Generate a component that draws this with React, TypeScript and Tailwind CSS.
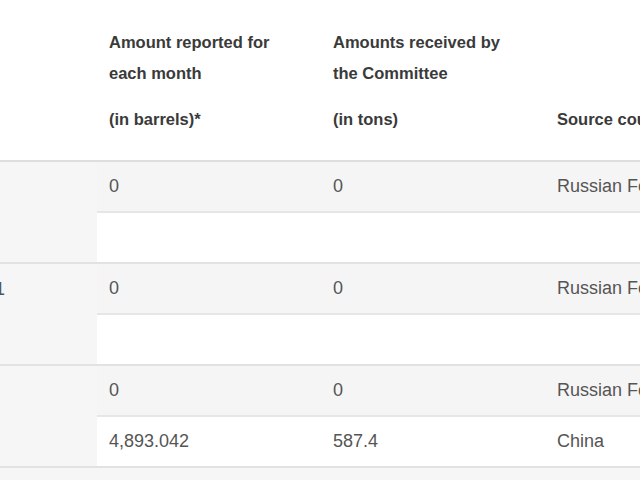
const groups = [
  {
    month: "May 2020",
    rows: [
      { barrels: "0", tons: "0", source: "Russian Federation" },
      { barrels: "", tons: "", source: "" },
    ],
  },
  {
    month: "March 2021",
    rows: [
      { barrels: "0", tons: "0", source: "Russian Federation" },
      { barrels: "", tons: "", source: "" },
    ],
  },
  {
    month: "June 2021",
    rows: [
      { barrels: "0", tons: "0", source: "Russian Federation" },
      { barrels: "4,893.042", tons: "587.4", source: "China" },
    ],
  },
];

export default function App() {
  return (
    <div className="w-[640px] h-[480px] overflow-hidden bg-[#f6f6f6] font-['Liberation_Sans',Arial,sans-serif]">
      <table className="ml-[-97px] border-collapse table-fixed w-[900px]">
        <colgroup>
          <col className="w-[194px]" />
          <col className="w-[224px]" />
          <col className="w-[224px]" />
          <col className="w-[258px]" />
        </colgroup>
        <thead className="bg-white">
          <tr className="border-b-2 border-[#dedede] align-bottom text-left text-[16.5px] font-bold text-[#3a3a3a]">
            <th className="px-3 pt-[27px] pb-[25px]"></th>
            <th className="px-3 pt-[27px] pb-[25px] leading-[31px] font-bold">
              <p>Amount reported for<br />each month</p>
              <p className="mt-[15px]">(in barrels)*</p>
            </th>
            <th className="px-3 pt-[27px] pb-[25px] leading-[31px] font-bold">
              <p>Amounts received by<br />the Committee</p>
              <p className="mt-[15px]">(in tons)</p>
            </th>
            <th className="px-3 pt-[27px] pb-[25px] leading-[31px] font-bold whitespace-nowrap">
              Source country
            </th>
          </tr>
        </thead>
        <tbody className="text-[18px] text-[#555]">
          {groups.map((g) =>
            g.rows.map((r, i) => (
              <tr
                key={g.month + i}
                className={
                  i === 0
                    ? "bg-[#f5f5f5] border-b-2 border-[#e6e6e6]"
                    : "bg-white border-b-2 border-[#e2e2e2]"
                }
              >
                {i === 0 && (
                  <td
                    rowSpan={2}
                    className="bg-[#f6f6f6] align-top pl-[7px] pr-3 pt-[12px] whitespace-nowrap"
                  >
                    {g.month}
                  </td>
                )}
                <td className="px-3 h-[51px] align-middle">{r.barrels}</td>
                <td className="px-3 h-[51px] align-middle">{r.tons}</td>
                <td className="px-3 h-[51px] align-middle whitespace-nowrap">{r.source}</td>
              </tr>
            ))
          )}
        </tbody>
      </table>
    </div>
  );
}
